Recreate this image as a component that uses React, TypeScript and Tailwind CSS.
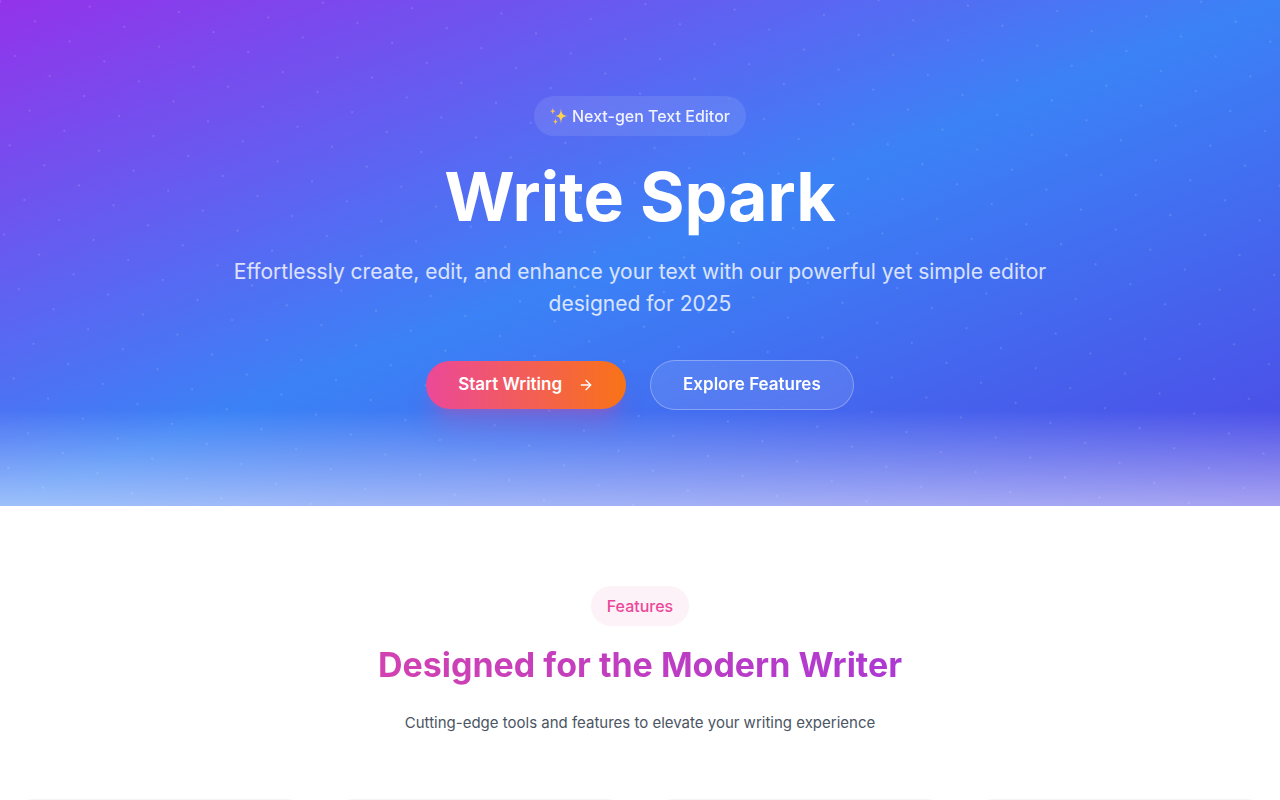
import { ArrowRight } from "lucide-react";

const cards = ["editor", "styles", "insights", "export"];

function Sparkles() {
    return (
        <svg viewBox="0 0 18 18" className="h-[18px] w-[18px]" aria-hidden="true">
            <path fill="#fcd34d" d="M11 1C11.4 6.8 12.2 8.2 17.8 9C12.2 9.8 11.4 11.2 11 17C10.6 11.2 9.8 9.8 5 9C9.8 8.2 10.6 6.8 11 1Z" />
            <path fill="#f8c15a" d="M2.8 .8C3.1 3.2 3.6 3.8 5.6 4.2C3.6 4.6 3.1 5.2 2.8 7.6C2.5 5.2 2 4.6 0 4.2C2 3.8 2.5 3.2 2.8 .8Z" />
            <path fill="#f8c15a" d="M5.5 11.2C5.8 13.6 6.3 14.2 8.2 14.6C6.3 15 5.8 15.6 5.5 18C5.2 15.6 4.7 15 2.8 14.6C4.7 14.2 5.2 13.6 5.5 11.2Z" />
        </svg>
    );
}

function Dots() {
    return (
        <svg className="absolute inset-0 h-full w-full" aria-hidden="true">
            <defs>
                <pattern id="dots" width="40" height="40" patternUnits="userSpaceOnUse" patternTransform="rotate(30)">
                    <circle cx="1" cy="1" r="1" fill="white" fillOpacity="0.17" />
                </pattern>
            </defs>
            <rect width="100%" height="100%" fill="url(#dots)" />
        </svg>
    );
}

function Hero() {
    return (
        <section className="relative overflow-hidden bg-[linear-gradient(to_bottom_right,#9333ea,#3b82f6,#4f46e5)] px-4 py-24 text-white">
            <Dots />
            <div className="absolute inset-x-0 bottom-0 h-24 bg-[linear-gradient(to_top,rgba(255,255,255,0.5),rgba(255,255,255,0))]" />
            <div className="relative mx-auto flex max-w-4xl flex-col items-center text-center">
                <div className="mb-6 flex items-center gap-1 rounded-full bg-white/10 px-4 py-2 font-medium text-white/90 backdrop-blur-sm">
                    <Sparkles />
                    <span>Next-gen Text Editor</span>
                </div>
                <h1 className="mb-6 text-[68px] leading-[72px] font-bold">Write Spark</h1>
                <p className="mb-10 text-[21px] leading-8 text-white/80">
                    Effortlessly create, edit, and enhance your text with our powerful yet simple editor designed for 2025
                </p>
                <div className="flex flex-wrap items-center justify-center gap-6">
                    <button className="flex h-12 items-center gap-4 rounded-full bg-[linear-gradient(to_right,#ec4899,#f97316)] px-8 text-[17px] font-semibold shadow-xl shadow-[#ec4899]/25">
                        Start Writing
                        <ArrowRight className="h-4 w-4" />
                    </button>
                    <button className="h-[50px] rounded-full border border-white/30 bg-white/10 px-8 text-[17px] font-semibold backdrop-blur-sm">
                        Explore Features
                    </button>
                </div>
            </div>
        </section>
    );
}

function Features() {
    return (
        <section className="bg-white px-4 py-20">
            <div className="mb-16 text-center">
                <div className="mx-auto mb-4 w-fit rounded-full bg-[#fdf2f8] px-4 py-2 font-medium text-[#ec4899]">Features</div>
                <h2 className="mb-6 bg-[linear-gradient(to_right,#ec4899,#9333ea)] bg-clip-text text-[34px] leading-[45px] font-bold text-transparent">
                    Designed for the Modern Writer
                </h2>
                <p className="text-[15px] leading-6 text-[#4b5563]">Cutting-edge tools and features to elevate your writing experience</p>
            </div>
            <div className="grid grid-cols-1 gap-8 sm:grid-cols-2 lg:grid-cols-4">
                {cards.map((card) => (
                    <div key={card} className="h-56 rounded-2xl border border-[#f3f4f6] bg-white" />
                ))}
            </div>
        </section>
    );
}

export default function App() {
    return (
        <main className="min-h-screen bg-white font-['Inter',sans-serif]">
            <Hero />
            <Features />
        </main>
    );
}
